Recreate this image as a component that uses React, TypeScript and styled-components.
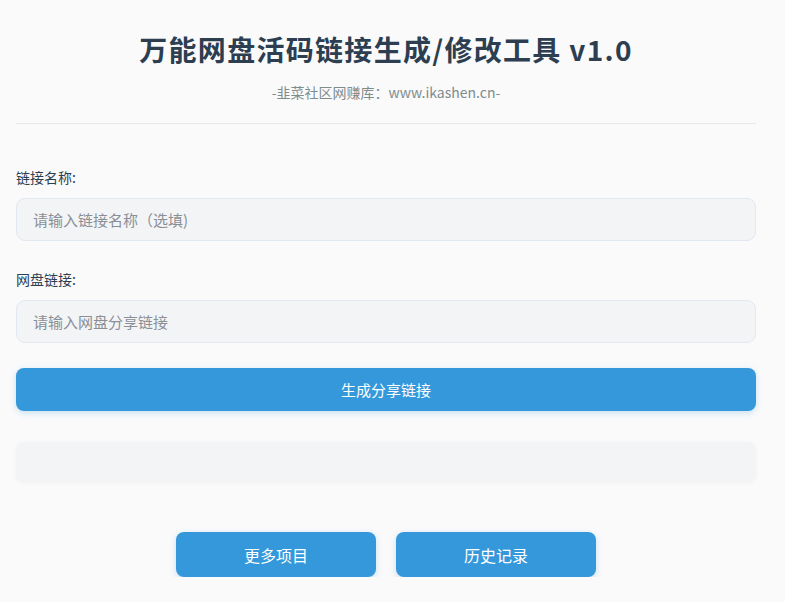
import React from "react";
import styled, { createGlobalStyle } from "styled-components";

const GlobalStyle = createGlobalStyle`
  html, body {
    margin: 0;
    padding: 0;
    background: #fafafb;
  }
  body {
    font-family: "Noto Sans CJK SC", "Noto Sans", sans-serif;
    color: #2c3e50;
  }
`;

const Page = styled.div`
  width: 740px;
  padding: 28px 0 0 16px;
`;

const Header = styled.header`
  display: flex;
  flex-direction: column;
  align-items: center;
  padding-bottom: 21px;
  border-bottom: 1px solid #e5e7eb;
`;

const Title = styled.h1`
  margin: 0;
  font-size: 28px;
  line-height: 42px;
  font-weight: 700;
  color: #2c3e50;
  letter-spacing: 1.3px;
`;

const Subtitle = styled.p`
  margin: 12px 0 0;
  font-size: 14px;
  line-height: 20px;
  color: #7f8c8d;
`;

const Form = styled.div`
  display: flex;
  flex-direction: column;
  padding-top: 43px;
`;

const Field = styled.div<{ $gap?: number }>`
  display: flex;
  flex-direction: column;
  gap: 11px;
  margin-bottom: ${(p) => p.$gap ?? 28}px;
`;

const Label = styled.label`
  font-size: 14px;
  line-height: 20px;
  color: #2c3e50;
`;

const Input = styled.input`
  box-sizing: border-box;
  width: 100%;
  height: 43px;
  padding: 0 16px;
  font-family: inherit;
  font-size: 15px;
  color: #2c3e50;
  background: #f3f4f6;
  border: 1px solid #e2e8f0;
  border-radius: 9px;
  outline: none;

  &::placeholder {
    color: #8a8f96;
  }
`;

const Button = styled.button<{ $wide?: boolean }>`
  box-sizing: border-box;
  width: ${(p) => (p.$wide ? "100%" : "200px")};
  height: ${(p) => (p.$wide ? 43 : 45)}px;
  border: none;
  border-radius: 8px;
  background: #3498db;
  color: #ffffff;
  font-family: inherit;
  font-size: ${(p) => (p.$wide ? 15 : 16)}px;
  box-shadow: 0 2px 6px rgba(52, 152, 219, 0.25);
  cursor: pointer;
`;

const Result = styled.div`
  height: 40px;
  margin-top: 31px;
  border-radius: 8px;
  background: #f3f4f6;
  box-shadow: 0 1px 4px rgba(0, 0, 0, 0.04);
`;

const Actions = styled.div`
  display: flex;
  justify-content: center;
  gap: 20px;
  margin-top: 50px;
`;

export default function App() {
  return (
    <>
      <GlobalStyle />
      <Page>
        <Header>
          <Title>万能网盘活码链接生成/修改工具 v1.0</Title>
          <Subtitle>-韭菜社区网赚库：www.ikashen.cn-</Subtitle>
        </Header>
        <Form>
          <Field>
            <Label>链接名称:</Label>
            <Input placeholder="请输入链接名称（选填)" />
          </Field>
          <Field $gap={25}>
            <Label>网盘链接:</Label>
            <Input placeholder="请输入网盘分享链接" />
          </Field>
          <Button $wide>生成分享链接</Button>
          <Result />
          <Actions>
            <Button>更多项目</Button>
            <Button>历史记录</Button>
          </Actions>
        </Form>
      </Page>
    </>
  );
}
